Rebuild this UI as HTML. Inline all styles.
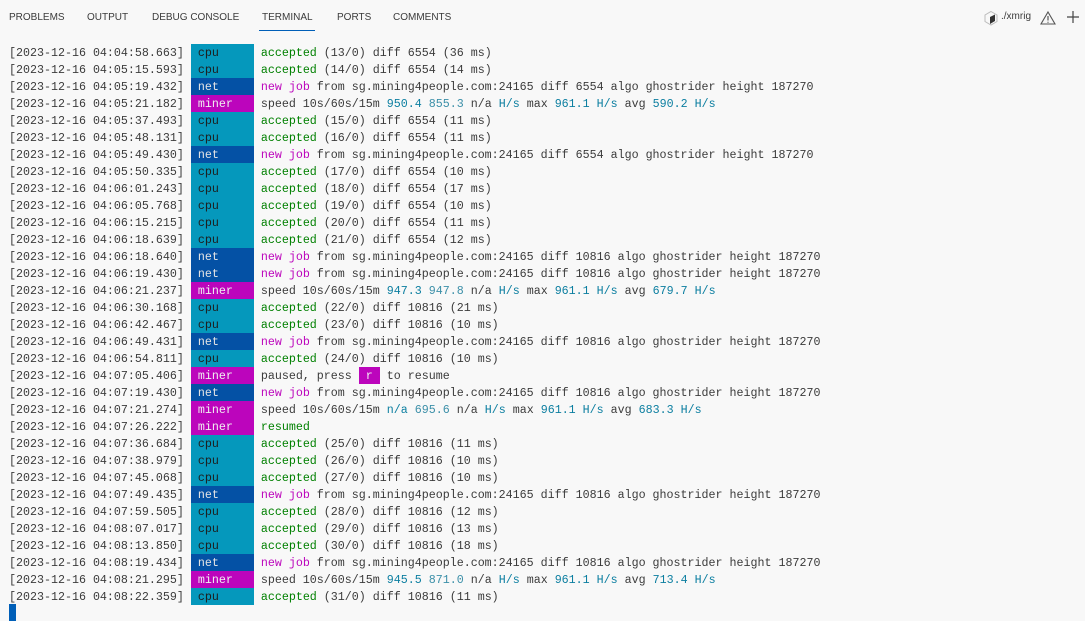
<!DOCTYPE html>
<html><head><meta charset="utf-8"><style>
body{margin:0;background:#f8f8f8;width:1085px;height:621px;overflow:hidden;position:relative;font-family:"Liberation Sans",sans-serif}
.tabs{position:absolute;top:0;left:0;height:36px;width:100%}
.tab{position:absolute;top:12px;font-size:10px;color:#3b3b3b;letter-spacing:0}
.ul{position:absolute;left:259px;top:30px;width:56px;height:1px;background:#005fb8}
.term{position:absolute;left:9px;top:44px;font-family:"Liberation Mono",monospace;font-size:11.67px;line-height:18px;color:#3b3b3b}
.l{height:17px;white-space:pre}
.l span{display:inline-block;height:17px;vertical-align:top}
.c{background:#0598bc;color:#1e1e1e}
.n{background:#0451a5;color:#e5e5e5}
.m{background:#bc05bc;color:#f0f0f0}
.g{color:#008000}
.p{color:#bc05bc}
.b{color:#0b7ea0}
.b2{color:#3b8fa8}
.cur{position:absolute;left:9px;top:604px;width:7px;height:17px;background:#005fb8}
</style></head><body>
<div class="tabs">
<span class="tab" style="left:9px">PROBLEMS</span>
<span class="tab" style="left:87px">OUTPUT</span>
<span class="tab" style="left:152px">DEBUG CONSOLE</span>
<span class="tab" style="left:262px">TERMINAL</span>
<span class="tab" style="left:337px">PORTS</span>
<span class="tab" style="left:393px">COMMENTS</span>
<div class="ul"></div>
<svg style="position:absolute;left:983px;top:10px" width="16" height="16" viewBox="0 0 16 16"><path d="M8 1.5L14 5v6.5L8 15 2 11.5V5z" fill="none" stroke="#bbb" stroke-width="1"/><path d="M7 7l5-2.5V11L7 14z" fill="#333"/></svg>
<span class="tab" style="left:1001px;top:11px">./xmrig</span>
<svg style="position:absolute;left:1040px;top:10px" width="16" height="16" viewBox="0 0 16 16"><path d="M8 2L15 14H1z" fill="none" stroke="#555" stroke-width="1.1"/><path d="M8 6v4.5M8 11.8v1" stroke="#555" stroke-width="1.2"/></svg>
<svg style="position:absolute;left:1066px;top:10px" width="14" height="14" viewBox="0 0 14 14"><path d="M7 1v12M1 7h12" stroke="#444" stroke-width="1.2"/></svg>
</div>
<div class="term"><div class="l">[2023-12-16 04:04:58.663] <span class="c"> cpu     </span> <span class="g">accepted</span> (13/0) diff 6554 (36 ms)</div><div class="l">[2023-12-16 04:05:15.593] <span class="c"> cpu     </span> <span class="g">accepted</span> (14/0) diff 6554 (14 ms)</div><div class="l">[2023-12-16 04:05:19.432] <span class="n"> net     </span> <span class="p">new job</span> from sg.mining4people.com:24165 diff 6554 algo ghostrider height 187270</div><div class="l">[2023-12-16 04:05:21.182] <span class="m"> miner   </span> speed 10s/60s/15m <span class="b">950.4</span> <span class="b2">855.3</span> n/a <span class="b">H/s</span> max <span class="b">961.1 H/s</span> avg <span class="b">590.2 H/s</span></div><div class="l">[2023-12-16 04:05:37.493] <span class="c"> cpu     </span> <span class="g">accepted</span> (15/0) diff 6554 (11 ms)</div><div class="l">[2023-12-16 04:05:48.131] <span class="c"> cpu     </span> <span class="g">accepted</span> (16/0) diff 6554 (11 ms)</div><div class="l">[2023-12-16 04:05:49.430] <span class="n"> net     </span> <span class="p">new job</span> from sg.mining4people.com:24165 diff 6554 algo ghostrider height 187270</div><div class="l">[2023-12-16 04:05:50.335] <span class="c"> cpu     </span> <span class="g">accepted</span> (17/0) diff 6554 (10 ms)</div><div class="l">[2023-12-16 04:06:01.243] <span class="c"> cpu     </span> <span class="g">accepted</span> (18/0) diff 6554 (17 ms)</div><div class="l">[2023-12-16 04:06:05.768] <span class="c"> cpu     </span> <span class="g">accepted</span> (19/0) diff 6554 (10 ms)</div><div class="l">[2023-12-16 04:06:15.215] <span class="c"> cpu     </span> <span class="g">accepted</span> (20/0) diff 6554 (11 ms)</div><div class="l">[2023-12-16 04:06:18.639] <span class="c"> cpu     </span> <span class="g">accepted</span> (21/0) diff 6554 (12 ms)</div><div class="l">[2023-12-16 04:06:18.640] <span class="n"> net     </span> <span class="p">new job</span> from sg.mining4people.com:24165 diff 10816 algo ghostrider height 187270</div><div class="l">[2023-12-16 04:06:19.430] <span class="n"> net     </span> <span class="p">new job</span> from sg.mining4people.com:24165 diff 10816 algo ghostrider height 187270</div><div class="l">[2023-12-16 04:06:21.237] <span class="m"> miner   </span> speed 10s/60s/15m <span class="b">947.3</span> <span class="b2">947.8</span> n/a <span class="b">H/s</span> max <span class="b">961.1 H/s</span> avg <span class="b">679.7 H/s</span></div><div class="l">[2023-12-16 04:06:30.168] <span class="c"> cpu     </span> <span class="g">accepted</span> (22/0) diff 10816 (21 ms)</div><div class="l">[2023-12-16 04:06:42.467] <span class="c"> cpu     </span> <span class="g">accepted</span> (23/0) diff 10816 (10 ms)</div><div class="l">[2023-12-16 04:06:49.431] <span class="n"> net     </span> <span class="p">new job</span> from sg.mining4people.com:24165 diff 10816 algo ghostrider height 187270</div><div class="l">[2023-12-16 04:06:54.811] <span class="c"> cpu     </span> <span class="g">accepted</span> (24/0) diff 10816 (10 ms)</div><div class="l">[2023-12-16 04:07:05.406] <span class="m"> miner   </span> paused, press <span class="m"> r </span> to resume</div><div class="l">[2023-12-16 04:07:19.430] <span class="n"> net     </span> <span class="p">new job</span> from sg.mining4people.com:24165 diff 10816 algo ghostrider height 187270</div><div class="l">[2023-12-16 04:07:21.274] <span class="m"> miner   </span> speed 10s/60s/15m <span class="b">n/a</span> <span class="b2">695.6</span> n/a <span class="b">H/s</span> max <span class="b">961.1 H/s</span> avg <span class="b">683.3 H/s</span></div><div class="l">[2023-12-16 04:07:26.222] <span class="m"> miner   </span> <span class="g">resumed</span></div><div class="l">[2023-12-16 04:07:36.684] <span class="c"> cpu     </span> <span class="g">accepted</span> (25/0) diff 10816 (11 ms)</div><div class="l">[2023-12-16 04:07:38.979] <span class="c"> cpu     </span> <span class="g">accepted</span> (26/0) diff 10816 (10 ms)</div><div class="l">[2023-12-16 04:07:45.068] <span class="c"> cpu     </span> <span class="g">accepted</span> (27/0) diff 10816 (10 ms)</div><div class="l">[2023-12-16 04:07:49.435] <span class="n"> net     </span> <span class="p">new job</span> from sg.mining4people.com:24165 diff 10816 algo ghostrider height 187270</div><div class="l">[2023-12-16 04:07:59.505] <span class="c"> cpu     </span> <span class="g">accepted</span> (28/0) diff 10816 (12 ms)</div><div class="l">[2023-12-16 04:08:07.017] <span class="c"> cpu     </span> <span class="g">accepted</span> (29/0) diff 10816 (13 ms)</div><div class="l">[2023-12-16 04:08:13.850] <span class="c"> cpu     </span> <span class="g">accepted</span> (30/0) diff 10816 (18 ms)</div><div class="l">[2023-12-16 04:08:19.434] <span class="n"> net     </span> <span class="p">new job</span> from sg.mining4people.com:24165 diff 10816 algo ghostrider height 187270</div><div class="l">[2023-12-16 04:08:21.295] <span class="m"> miner   </span> speed 10s/60s/15m <span class="b">945.5</span> <span class="b2">871.0</span> n/a <span class="b">H/s</span> max <span class="b">961.1 H/s</span> avg <span class="b">713.4 H/s</span></div><div class="l">[2023-12-16 04:08:22.359] <span class="c"> cpu     </span> <span class="g">accepted</span> (31/0) diff 10816 (11 ms)</div></div>
<div class="cur"></div>
</body></html>
